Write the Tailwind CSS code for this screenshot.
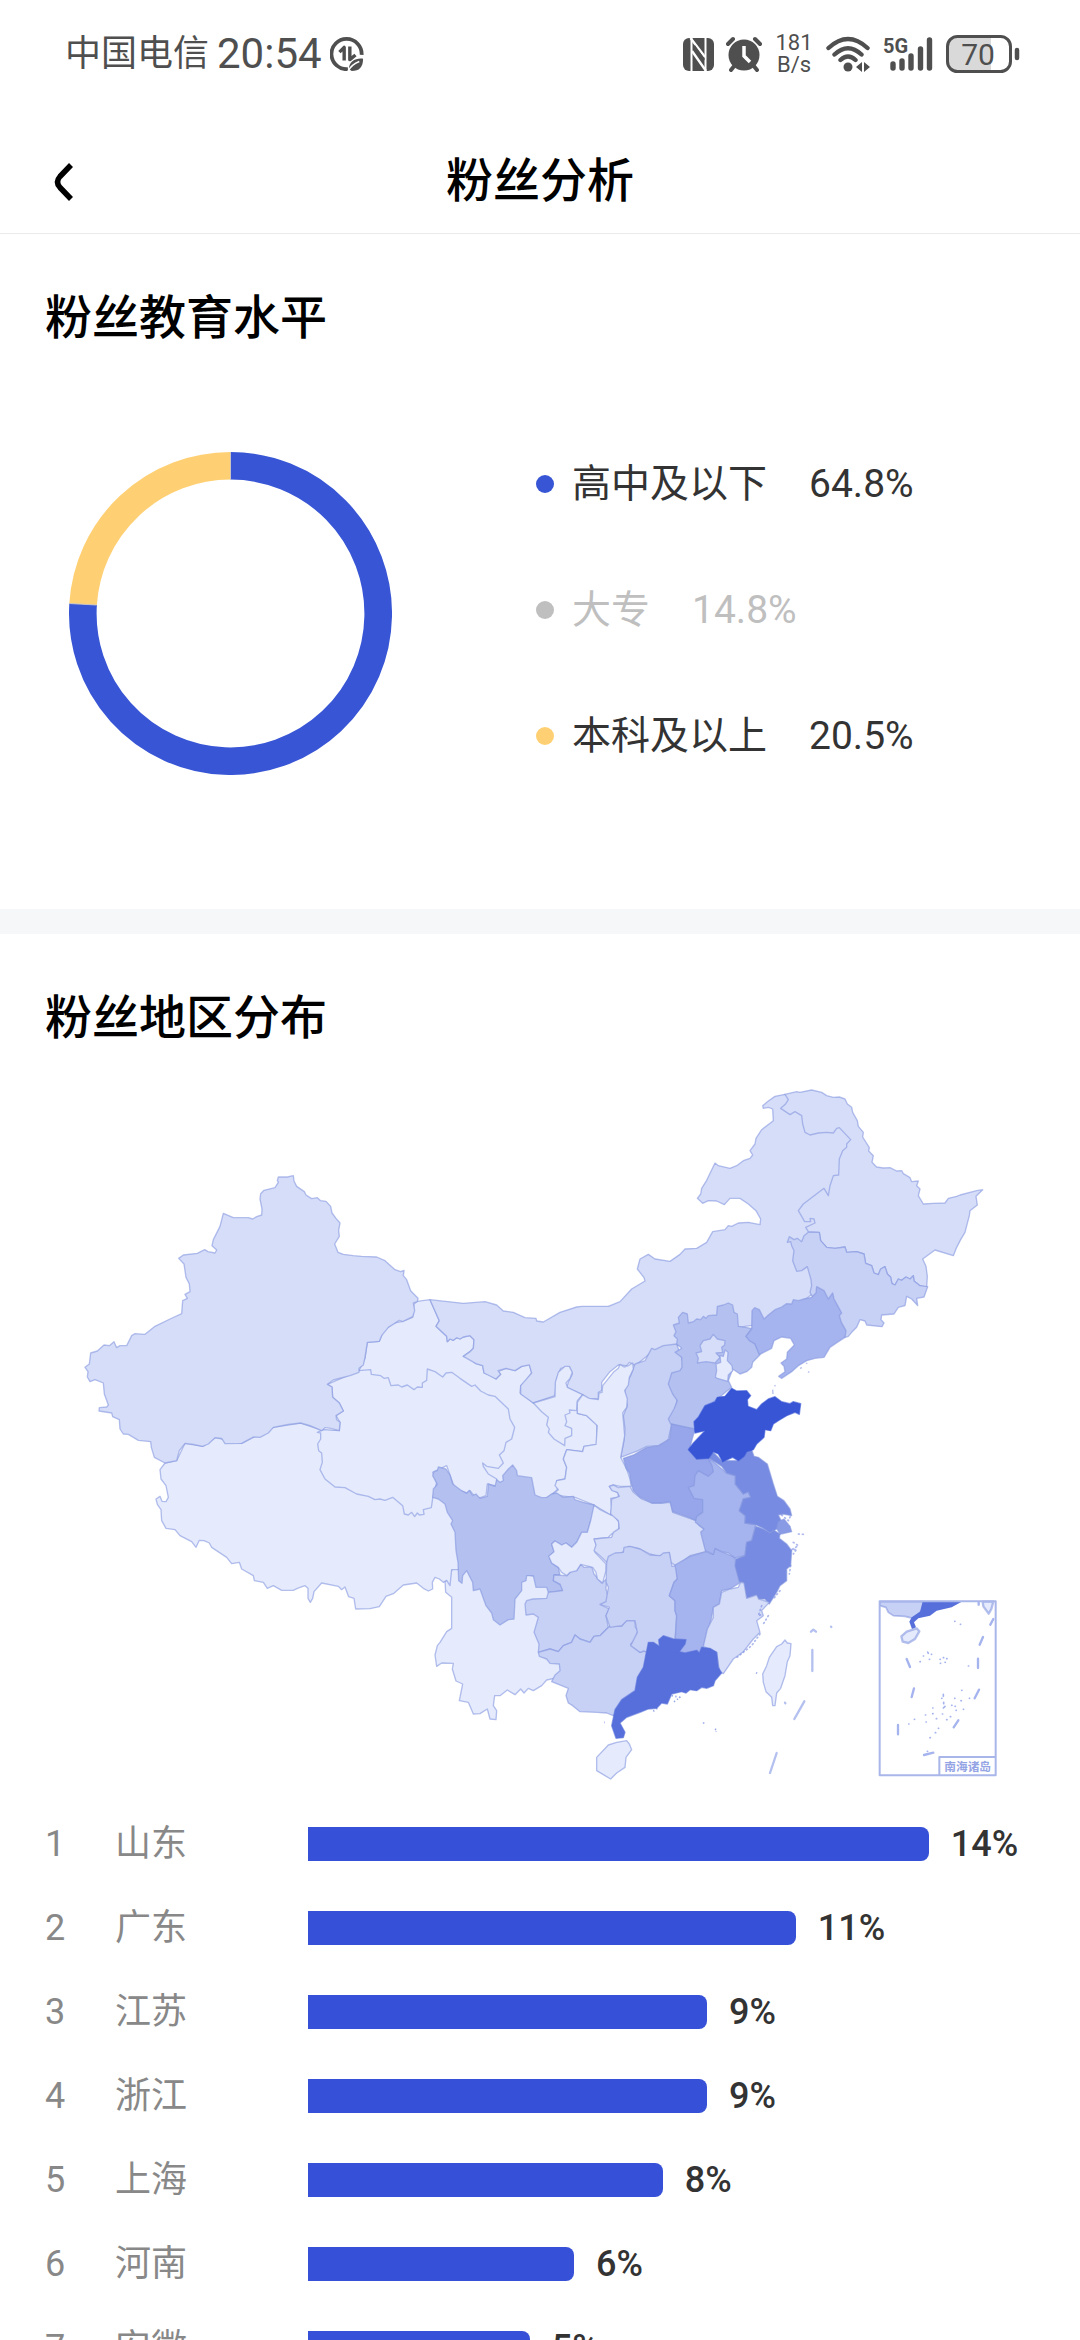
<!DOCTYPE html>
<html lang="zh-CN">
<head>
  <meta charset="UTF-8" />
  <meta name="viewport" content="width=device-width, initial-scale=1" />
  <title>粉丝分析</title>
  <script src="https://cdn.jsdelivr.net/npm/@tailwindcss/browser@4"></script>
  <style>
    body {
      font-family: Roboto, 'Noto Sans CJK SC', sans-serif;
    }
  </style>
</head>
<body class="bg-white h-screen flex flex-col overflow-hidden text-[#333333]">

  <!-- Status bar -->
  <div class="h-[108px] shrink-0 flex items-center justify-between pl-[65px] pr-[60px] text-[#4f4f4f]">
    <div class="flex items-center gap-2">
      <span class="text-[36px] leading-[44px]">中国电信</span>
      <span class="text-[42px] leading-[44px]">20:54</span>
      <svg class="size-[34px]" viewBox="0 0 36 36" fill="none" stroke="currentColor">
        <path d="M33.5 19A16 16 0 1 0 19 34" stroke-width="4" />
        <path d="M10 16L15 11V25M21 10V24L27 19" stroke-width="3.6" stroke-linejoin="round" />
        <path d="M35 23C27 22 20 26 20 34L23 36C31 36 35 32 35 23Z" fill="currentColor" stroke="none" />
        <path d="M19 36C22 31 26 28 31 26" stroke="#fff" stroke-width="1.6" />
      </svg>
    </div>
    <div class="flex items-center gap-3">
      <svg class="w-[31px] h-[33px]" viewBox="0 0 31 33">
        <rect x="0" y="0" width="31" height="33" rx="6" fill="currentColor" />
        <path d="M8.500 0V33M22.500 33V0" stroke="#fff" stroke-width="2" fill="none" />
        <path d="M7.500 0L22 19M9 13L23 33" stroke="#fff" stroke-width="2.400" fill="none" />
        <path d="M11 8L21 22" stroke="currentColor" stroke-width="2.500" />
      </svg>
      <svg class="size-9" viewBox="0 0 36 36">
        <path d="M9 29L5 34M27 29L31 34M2 8L7 3M34 8L29 3" stroke="currentColor" stroke-width="4" stroke-linecap="round" />
        <circle cx="18" cy="19" r="15.500" fill="currentColor" />
        <path d="M18 10V20L24 26" stroke="#fff" stroke-width="3.500" fill="none" />
      </svg>
      <div class="w-10 text-center text-[22px] leading-[22px]">
        <div>181</div>
        <div>B/s</div>
      </div>
      <svg class="w-11 h-9" viewBox="0 0 44 36" fill="none" stroke="currentColor" stroke-width="4.400" stroke-linecap="round">
        <path d="M2.500 12Q22 -6 41.500 12M8.500 18.500Q22 6 35.500 18.500M14.500 24Q22 17 29.500 24" />
        <circle cx="22" cy="31" r="4.500" fill="currentColor" stroke="none" />
        <path d="M36 26V36L30 31ZM38 26V36L44 31Z" fill="currentColor" stroke="none" />
      </svg>
      <svg class="w-13 h-9 overflow-visible" viewBox="0 0 52 36">
        <text x="1" y="17" font-size="20" font-weight="700" fill="currentColor" font-family="Roboto, sans-serif">5G</text>
        <path d="M11 28V32M20 25V32M29 20V32M38.500 13V32M47.500 4V32" stroke="currentColor" stroke-width="5.400" stroke-linecap="round" />
      </svg>
      <svg class="w-[74px] h-[38px]" viewBox="0 0 74 38">
        <path d="M11 2H45V36H11Q2 36 2 27V11Q2 2 11 2Z" fill="#d9d9d9" />
        <rect x="1.500" y="1.500" width="63" height="35" rx="10" fill="none" stroke="currentColor" stroke-width="3" />
        <path d="M71 15V23" stroke="currentColor" stroke-width="4.500" stroke-linecap="round" />
        <text x="32" y="30" text-anchor="middle" font-size="30" fill="currentColor" font-family="Roboto, sans-serif">70</text>
      </svg>
    </div>
  </div>

  <!-- Title bar -->
  <header class="h-[126px] shrink-0 grid grid-cols-[1fr_auto_1fr] items-center pt-5 px-[45px] border-b border-[#ebebeb] text-black">
    <button type="button" aria-label="返回" class="w-12 h-12 flex items-center">
      <svg class="w-9 h-10" viewBox="0 0 36 40" fill="none" stroke="currentColor" stroke-width="5.500">
        <path d="M26 4L15 15.500Q10 21 15 26.500L26 38" />
      </svg>
    </button>
    <h1 class="text-[47px] leading-[60px] font-medium">粉丝分析</h1>
  </header>

  <main class="flex-1 min-h-0 overflow-hidden">
    <section class="pt-[54px] pb-[134px]">
      <h2 class="px-[45px] text-[47px] leading-[60px] font-medium text-black">粉丝教育水平</h2>
      <div class="mt-[104px] pl-[69px] flex items-center">
        <svg class="size-[323px] shrink-0" viewBox="0 0 323 323" fill="none" stroke-width="27.600">
          <path d="M161.500 13.800A147.700 147.700 0 1 1 14.100 152.200" stroke="#3755d5" />
          <path d="M14.100 152.200A147.700 147.700 0 0 1 161.500 13.800" stroke="#ffd073" />
          <path d="M161.500 0V27.600M0 151.500L27.500 153" stroke="#c9c4c0" stroke-width="1" />
        </svg>
        <ul class="ml-36 mb-2 text-[39px] leading-[54px] flex flex-col gap-[72px]">
          <li class="flex items-center gap-[18px]">
            <span class="size-[18px] rounded-full bg-[#3755d5]"></span>
            <span>高中及以下</span>
            <span class="ml-6">64.8%</span>
          </li>
          <li class="flex items-center gap-[18px] text-[#bfbfbf]">
            <span class="size-[18px] rounded-full bg-[#bfbfbf]"></span>
            <span>大专</span>
            <span class="ml-6">14.8%</span>
          </li>
          <li class="flex items-center gap-[18px]">
            <span class="size-[18px] rounded-full bg-[#ffd073]"></span>
            <span>本科及以上</span>
            <span class="ml-6">20.5%</span>
          </li>
        </ul>
      </div>
    </section>

    <div class="h-[25px] bg-[#f6f7f9]"></div>

    <section class="pt-[54px]">
      <h2 class="px-[45px] text-[47px] leading-[60px] font-medium text-black">粉丝地区分布</h2>

      <svg class="mt-[21px] w-full" viewBox="0 0 3240 2190" stroke="#8496e0" stroke-opacity="0.6" stroke-width="4" stroke-linejoin="round">
        <!-- Gansu, Yunnan -->
        <g transform="translate(1200 540)" fill="#e5ebfc">
          <path d="M52 157L90 152L118 215L108 232L125 248L140 262L142 278L150 270L160 274L170 266L180 270L190 264L210 260L222 272L220 298L210 308L190 322L208 326L228 344L248 350L252 372L268 378L288 390L302 376L294 368L318 358L345 365L365 352L388 345L395 372L375 400L362 410L360 432L380 446L400 462L415 465L460 460L540 470L532 493L560 500L590 525L592 586L552 592L548 608L500 602L490 630L500 655L495 690L470 695L472 722L450 740L430 760L300 740L240 640L200 600L-60 500L-123 365L-105 328L-98 280L-62 277L-50 245L-20 222L5 218L38 205L42 165Z" />
          <path d="M150 968L148 988L135 995L137 1030L155 1045L155 1138L140 1148L120 1180L112 1190L105 1218L110 1252L125 1242L160 1243L157 1260L168 1296L188 1305L178 1355L205 1360L220 1395L240 1394L262 1380L270 1410L288 1412L290 1385L280 1370L284 1340L300 1340L322 1323L345 1337L362 1320L372 1332L385 1318L400 1325L425 1310L440 1293L500 1280L500 1000L180 940L165 955Z" />
        </g>
        <!-- Tibet, Qinghai, Xinjiang -->
        <g transform="translate(180 240)">
          <path fill="#e5ebfc" d="M315 942L300 962L303 990L318 1010L325 1045L318 1058L306 1057L300 1042L288 1050L292 1066L303 1082L305 1115L318 1138L345 1142L360 1160L395 1178L408 1195L418 1174L432 1175L448 1182L455 1195L500 1225L515 1244L538 1240L545 1260L580 1280L583 1295L610 1300L622 1318L640 1310L665 1324L700 1324L712 1318L735 1310L744 1318L744 1348L751 1360L758 1348L762 1328L785 1302L835 1312L845 1322L855 1314L866 1343L882 1348L887 1380L930 1379L958 1373L978 1342L1000 1334L1030 1308L1070 1302L1090 1318L1105 1326L1118 1320L1117 1300L1125 1285L1138 1290L1150 1300L1160 1294L1170 1310L1175 1262L1195 1262L1250 1100L1118 1000L900 850L785 843L722 822L640 835L545 883L465 866L428 892L375 883L350 935Z" />
          <path fill="#e5ebfc" d="M897 665L932 662L934 676L962 680L972 688L985 686L993 710L1015 708L1025 714L1042 708L1062 722L1072 714L1087 715L1087 702L1100 694L1102 660L1125 668L1148 684L1158 672L1175 670L1200 688L1235 712L1245 708L1262 726L1285 738L1305 742L1330 766L1345 780L1350 810L1364 835L1355 870L1338 880L1332 905L1318 918L1330 942L1315 958L1280 952L1268 942L1270 952L1285 975L1310 990L1312 1012L1282 1005L1278 1040L1255 1048L1238 1035L1230 1025L1220 1032L1185 1020L1160 950L1118 970L1130 1000L1118 1048L1114 1076L1090 1082L1092 1096L1078 1098L1072 1092L1064 1103L1055 1090L1045 1098L1033 1095L1028 1070L998 1045L975 1054L960 1050L945 1052L925 1042L890 1035L855 1016L825 1014L795 990L780 962L787 940L785 912L776 905L773 885L782 870L782 852L772 850L790 842L838 845L840 820L828 800L850 786L838 762L818 745L816 714L802 706Z" />
          <path fill="#d6ddf8" d="M655 84L682 84L700 80L702 96L710 112L733 128L738 138L755 149L772 146L782 155L798 157L812 172L816 192L828 208L840 222L836 244L838 262L824 285L834 310L850 316L880 320L905 322L950 324L975 335L1005 362L1022 368L1032 364L1030 380L1040 392L1052 425L1074 448L1072 458L1060 462L1064 485L1058 503L1028 518L1018 514L985 535L965 560L958 577L922 580L915 625L910 648L897 658L897 670L870 680L820 693L802 706L816 714L818 745L838 762L850 786L828 800L830 812L840 820L838 845L812 838L795 836L785 845L750 830L722 822L685 826L640 835L625 852L600 865L580 864L545 883L495 884L485 868L465 866L445 885L428 892L400 886L375 883L358 905L350 935L315 942L283 925L274 895L272 878L235 874L205 856L190 855L180 840L178 812L158 803L155 792L117 786L118 776L140 774L145 768L133 735L130 702L105 692L90 698L82 684L84 668L75 655L88 645L92 612L112 606L132 588L148 590L162 578L170 596L180 590L200 590L215 560L225 554L255 556L285 532L330 510L365 494L368 455L382 448L375 436L390 428L388 405L378 385L372 345L356 328L370 318L412 313L434 302L444 308L465 312L470 303L456 290L460 272L480 232L490 193L520 206L565 206L578 210L590 203L605 198L606 180L600 150L602 134L612 124L645 116L655 100L652 94Z" />
        </g>
        <!-- North and north-east -->
        <g transform="translate(1800 0)">
          <path fill="#d6ddf8" d="M-510 692L-410 703L-345 698L-310 708L-290 726L-260 730L-225 746L-192 748L-190 756L-170 759L-120 730L-70 714L-55 712L25 712L60 698L95 660L135 636L132 626L112 600L120 570L145 556L165 570L210 577L240 556L255 540L290 538L320 520L338 488L375 482L385 470L395 472L415 462L445 460L480 467L482 450L468 425L445 405L420 388L390 388L373 407L350 396L325 395L308 403L292 388L302 375L305 358L320 334L345 282L355 290L390 298L410 290L430 275L450 268L458 258L450 245L465 225L468 208L485 182L520 155L518 120L505 115L490 118L488 110L505 96L525 82L555 76L760 150L760 212L700 600L645 670L520 760L415 775L230 830L155 850L105 890L88 880L80 890L55 888L30 908L5 940L5 965L-5 970L-5 990L-35 990L-55 977L-100 955L-95 940L-83 915L-92 893L-118 898L-130 930L-135 980L-200 1002L-238 975L-238 950L-205 912L-212 888L-235 892L-255 905L-282 898L-306 905L-298 916L-312 930L-348 912L-352 890L-372 884L-410 862L-390 848L-380 838L-378 812L-390 800L-410 804L-420 810L-430 806L-440 814L-450 810L-458 818L-460 802L-492 772L-482 755Z" />
          <path fill="#d6ddf8" d="M555 76L590 68L600 70L635 63L665 70L680 80L700 85L718 84L735 90L742 105L755 115L758 130L772 155L775 172L790 190L788 204L808 236L806 246L820 260L816 280L830 294L850 297L870 296L890 306L905 305L910 314L930 326L935 338L955 336L950 350L960 360L955 380L970 405L1000 403L1035 402L1045 388L1070 382L1080 378L1130 365L1148 362L1128 382L1132 408L1110 425L1108 440L1095 490L1082 512L1070 535L1060 560L1005 543L968 570L978 592L982 622L980 655L960 650L942 636L940 620L930 630L918 624L905 634L895 630L885 648L876 644L872 625L862 615L855 593L842 600L835 617L822 612L815 590L797 583L792 555L770 548L740 550L735 534L705 538L680 535L662 515L658 490L625 488L617 475L645 462L642 450L630 448L632 458L614 458L595 425L610 405L672 358L685 380L690 350L700 320L716 318L718 270L728 245L740 235L740 225L752 212L718 176L710 178L700 192L680 190L655 192L630 198L615 190L608 165L605 140L585 128L570 137L542 118L556 106L565 92Z" />
          <path fill="#c7d0f5" d="M562 520L568 503L582 512L592 508L605 518L612 500L625 490L658 490L662 515L680 535L705 538L735 534L740 550L770 548L792 555L797 583L815 590L822 612L835 617L842 600L855 593L862 615L872 625L876 644L885 648L895 630L905 634L918 624L930 630L940 620L942 636L960 650L983 653L972 684L950 688L953 710L935 690L920 682L915 710L895 715L882 735L845 738L843 752L852 762L846 773L800 768L795 756L780 752L770 775L755 790L745 802L735 805L690 780L630 670L635 650L633 632L622 593L605 605L590 607L578 575L582 545L575 530L572 518Z" />
          <path fill="#c7d0f5" d="M105 885L135 875L155 838L165 842L190 830L230 825L250 880L230 1000L212 1080L205 1110L200 1118L180 1130L140 1132L115 1145L62 1165L72 1115L75 1080L70 1040L82 1010L74 980L75 950L92 920Z" />
          <path fill="#b4c1f0" d="M235 745L248 730L262 735L265 762L280 758L290 750L302 752L310 742L318 748L325 740L350 738L352 712L370 708L385 702L398 708L402 730L412 735L415 772L455 778L438 802L465 825L480 857L458 880L455 895L440 908L420 915L398 900L385 935L395 955L340 1000L290 1085L250 1078L212 1065L205 1050L222 1020L232 995L218 975L205 945L215 912L240 905L246 895L245 865L225 850L245 838L230 825L232 810L222 800L228 788L220 768L238 762Z" />
          <path fill="#d6ddf8" d="M340 796L352 810L375 815L374 828L365 835L368 850L348 852L360 865L345 882L318 878L292 882L295 868L288 852L305 848L300 830L310 815L330 810Z" />
          <path fill="#e5ebfc" d="M375 843L384 850L382 875L396 890L398 905L385 918L383 937L352 928L346 925L350 905L348 885L362 880L360 860L370 862Z" />
          <path fill="#a5b3ee" d="M650 653L672 665L685 690L698 672L702 690L714 712L725 732L718 740L724 760L738 785L735 805L712 820L690 835L672 865L645 868L620 875L595 890L575 908L545 928L536 922L555 908L552 892L543 882L560 870L562 850L583 828L572 808L545 804L522 815L515 838L478 857L465 825L448 815L438 802L455 780L456 725L464 716L478 722L492 750L505 738L525 722L545 714L560 704L575 705L580 692L595 695L612 690L635 685L648 672Z" />
          <path fill="#a5b3ee" d="M600 898L606 896M624 908L628 910M618 882L622 884M524 948L526 952M518 962L519 975" />
        </g>
        <!-- West and south-west -->
        <g transform="translate(1200 540)">
          <path fill="#e5ebfc" d="M400 462L465 443L466 400L475 370L495 352L508 352L517 370L510 388L498 402L502 415L548 437L532 455L530 485L508 483L510 492L495 498L500 518L495 530L515 538L515 560L495 568L494 590L462 570L445 550L448 540L440 528L445 505L425 488Z" />
          <path fill="#e5ebfc" d="M548 437L568 448L595 452L597 432L606 430L608 410L640 370L655 358L660 346L672 354L685 350L698 342L700 360L688 385L685 408L674 425L682 450L680 475L668 492L674 560L662 625L680 660L690 690L694 712L660 712L640 708L628 712L636 722L655 732L655 745L632 748L635 775L632 798L582 768L525 745L455 738L475 722L465 710L470 695L495 690L500 655L490 630L500 602L548 608L552 592L588 586L592 530L560 500L532 493L532 460Z" />
          <path fill="#b4c1f0" d="M98 680L102 668L112 665L115 654L138 660L150 678L158 705L185 725L200 733L208 724L218 740L228 735L240 748L262 742L265 705L285 712L290 692L300 700L310 695L308 680L325 660L338 648L350 665L352 680L395 686L405 738L425 746L440 745L455 735L470 732L490 745L520 742L525 752L550 760L582 768L585 800L572 815L562 850L545 850L530 880L515 895L498 882L485 888L465 876L455 885L462 908L448 922L455 942L475 955L480 978L462 978L460 995L485 1010L488 1025L445 1030L440 1015L408 1015L400 980L380 980L378 995L365 1000L365 1025L345 1050L342 1110L325 1112L300 1128L280 1112L275 1092L258 1070L240 1020L220 1025L218 1000L200 965L188 980L186 1003L176 995L174 940L168 905L165 850L153 825L158 815L142 790L135 765L115 750L98 745L100 720L112 706Z" />
          <path fill="#c7d0f5" d="M375 1065L380 1055L398 1050L440 1048L445 1030L488 1025L480 1005L460 995L462 978L500 980L515 965L530 965L542 946L552 955L575 953L582 975L605 1002L620 990L618 1020L628 1055L603 1068L628 1080L618 1100L625 1135L600 1160L582 1162L570 1180L540 1170L525 1158L515 1180L490 1190L475 1208L450 1200L415 1210L417 1185L402 1150L415 1105L400 1095L378 1098Z" />
          <path fill="#c7d0f5" d="M415 1210L450 1200L475 1208L490 1190L515 1180L525 1158L540 1170L570 1180L582 1162L600 1160L630 1130L665 1132L678 1115L705 1115L706 1135L714 1145L705 1175L692 1185L720 1210L740 1205L735 1260L720 1330L640 1400L620 1392L590 1390L540 1388L518 1370L505 1362L498 1340L505 1318L455 1298L465 1278L480 1265L478 1245L450 1243L440 1230L418 1222Z" />
          <path fill="#e5ebfc" d="M582 768L600 782L632 798L642 798L657 820L655 850L635 855L625 865L583 870L590 890L585 910L618 945L618 965L608 1002L592 990L588 970L578 955L542 946L530 965L510 970L500 980L485 970L475 955L455 942L446 922L462 908L455 885L465 876L485 888L498 882L515 895L530 880L545 850L562 850L572 815Z" />
        </g>
        <!-- East and south -->
        <g transform="translate(1740 900)">
          <path fill="#d6ddf8" d="M88 352L100 348L115 356L150 352L160 370L185 390L215 402L245 402L272 400L278 430L348 455L358 470L372 480L378 548L330 560L290 592L272 580L268 552L235 562L210 555L180 540L145 532L130 548L80 580L60 560L42 545L48 528L42 510L95 505L100 490L118 478L115 455L92 435L95 390L118 382L112 370L96 365Z" />
          <path fill="#97a6ea" d="M130 268L160 258L200 235L235 230L268 210L275 165L345 180L330 235L385 268L402 300L380 392L368 430L348 455L328 446L300 436L278 428L270 398L245 402L215 402L180 385L160 365L154 345L148 312L138 298Z" />
          <path fill="#c7d0f5" d="M80 580L85 562L105 552L130 550L132 535L150 532L180 540L210 558L240 560L250 552L268 550L276 592L290 590L292 630L282 640L268 680L285 695L285 725L290 740L285 815L205 850L190 846L180 850L152 830L172 790L165 755L140 755L125 770L90 775L78 740L88 715L60 706L78 698L85 655L78 640Z" />
          <path fill="#a5b3ee" d="M285 588L330 562L378 548L400 556L405 538L425 548L465 565L470 600L482 640L450 660L425 665L418 705L400 715L395 745L370 835L358 855L300 855L286 808L290 740L285 725L285 695L268 680L282 640L292 630Z" />
          <path fill="#a5b3ee" d="M385 268L400 278L440 312L466 320L466 345L490 375L505 368L512 385L490 390L478 425L496 440L495 462L527 467L515 515L500 520L495 560L465 567L445 552L425 548L405 538L400 556L376 545L362 490L372 480L346 460L350 442L368 430L368 392L342 388L325 355L342 350L345 320L355 305L385 322L400 308L396 290Z" />
          <path fill="#768be1" d="M385 266L400 250L425 275L475 275L500 248L515 242L522 262L535 265L562 285L580 345L592 382L612 395L630 420L635 440L610 435L595 438L610 468L570 492L550 478L527 467L495 462L496 440L478 425L490 390L512 385L505 368L490 375L466 345L466 320L440 312L425 292Z" />
          <path fill="#8a9be6" d="M595 458L612 450L630 472L635 488L600 496L590 478Z" />
          <path fill="#768be1" d="M527 472L550 480L570 492L582 484L600 495L598 508L620 525L635 545L632 590L620 600L620 635L600 650L590 670L568 705L555 690L535 690L528 678L500 688L490 640L478 638L465 590L468 570L495 560L500 520L515 515Z" />
          <path fill="#d6ddf8" d="M492 642L500 688L530 678L536 690L568 700L545 725L550 740L530 755L540 790L520 810L490 848L460 870L430 914L418 905L410 850L370 832L382 780L400 745L400 715L418 705L425 670L450 660L475 655L482 640Z" />
          <path fill="#566fdb" stroke="#566fdb" d="M205 820L220 820L238 832L236 812L250 800L280 810L318 812L315 825L298 848L315 852L350 844L358 852L365 835L390 838L410 850L415 895L425 912L405 935L400 950L380 958L365 955L350 965L330 962L318 972L305 968L275 975L262 1005L245 1002L230 1018L205 1020L180 1030L140 1045L120 1062L135 1090L130 1106L108 1108L95 1070L105 1022L125 992L165 965L172 925L190 895Z" />
          <path fill="#3755d5" stroke="#3755d5" d="M455 58L470 66L500 65L512 80L502 92L504 112L530 122L545 105L565 90L585 83L605 98L630 104L640 98L662 104L658 136L645 130L620 140L595 155L580 165L572 185L555 182L552 205L530 225L520 242L500 248L492 262L475 275L458 265L428 278L415 255L400 248L386 268L350 270L325 242L340 222L375 185L345 192L342 158L355 145L375 110L405 98L412 85L435 82Z" />
          <path fill="#e5ebfc" d="M85 1128L110 1120L140 1115L148 1125L155 1142L138 1165L135 1195L110 1212L92 1230L75 1220L50 1205L50 1165Z" />
          <path fill="none" stroke="#768be1" stroke-width="5" stroke-linecap="round" stroke-dasharray="3 9" d="M605 438L625 455L632 440M655 495L672 496M640 520L655 530L630 545L650 540L640 555M632 590L628 615M600 665L580 690M545 710L535 740L550 735M565 740L550 765M540 795L515 830L490 850L465 870" />
          <path fill="none" stroke="#566fdb" stroke-width="5" stroke-dasharray="4 7" d="M275 980L300 985L280 1000M232 1018L215 1030M72 1060L74 1060M370 1060L372 1064M405 1080L411 1084L408 1088M528 911L534 914" />
        </g>
        <!-- Taiwan, dashes and the South China Sea inset -->
        <g transform="translate(2280 1530)">
          <path fill="#e5ebfc" d="M75 183L82 192L93 194L90 230L82 248L75 290L62 328L50 342L45 380L38 380L35 355L18 338L10 310L8 285L20 260L28 235L50 203L65 195Z" />
          <g fill="none" stroke="#b4c1f0" stroke-opacity="1" stroke-width="7" stroke-linecap="round">
            <path d="M157 213V276M133 367L103 420M50 522L30 582M153 158L160 152L168 158M213 143L214 144M75 371L76 373" />
          </g>
          <path fill="#c7d0f5" stroke-width="5" d="M360 68H490L485 95L460 118L435 112L400 110L385 100L378 85L360 80Z" />
          <path fill="#566fdb" stroke="none" d="M488 68H605L575 85L530 95L510 110L475 118L462 130L468 145L456 150L448 128L455 115L480 98Z" />
          <path fill="#e5ebfc" stroke-width="7" d="M470 148L478 157L465 180L445 192L428 188L424 172L440 158ZM668 68L670 82L686 104L694 90L700 68Z" />
          <g fill="none" stroke="#a5b3ee" stroke-opacity="1" stroke-width="7" stroke-linecap="round">
            <path d="M669 174L659 197M654 239V267M657 332L644 358M595 424L581 445M440 240L450 264M462 328L455 354M414 438V466M492 528L520 521M700 120L691 137M656 70V77" />
          </g>
          <path fill="none" stroke="#a5b3ee" stroke-opacity="1" stroke-width="5" stroke-linecap="round" d="M480 248H481M490 231H491M503 219L505 223M514 226H515M508 241H509M540 241H541M550 236H551M560 239H561M541 253H542M555 250H556M584 127H585M601 136H602M625 261H626M605 334H606M550 346V352M545 358H546M584 358H585M628 358H629M551 370V374M575 379H576M585 382H586M603 365H604M610 391H611M588 394H589M555 382L550 387M518 387H519M496 408H497M518 404H519M547 405H548M529 419H530M560 422H561M571 413H572M463 421H464M446 435H447M498 429H499M535 448H536M526 461H527M510 476H511M502 517H503" />
          <path fill="none" stroke="#a9b6ea" stroke-opacity="1" stroke-width="6" d="M359 67H707V589H359ZM538 589V534H707" />
          <text x="623" y="576" text-anchor="middle" font-size="35" font-weight="700" fill="#94a4e5" stroke="none" font-family="Noto Sans CJK SC, sans-serif">南海诸岛</text>
        </g>
      </svg>

      <ol id="regionList" class="mt-[3px] px-[45px] text-[36px] leading-[48px]"></ol>
    </section>
  </main>

  <script>
    const regions = [
      ['山东', 14],
      ['广东', 11],
      ['江苏', 9],
      ['浙江', 9],
      ['上海', 8],
      ['河南', 6],
      ['安徽', 5],
    ];
    // track width taken by one percent of fans
    const step = 6.1;

    document.getElementById('regionList').innerHTML = regions.map(([name, value], i) => `
      <li class="h-[84px] flex items-center">
        <span class="w-[70px] shrink-0 text-[#888888]">${i + 1}</span>
        <span class="w-[193px] shrink-0 text-[#888888]">${name}</span>
        <div class="flex-1 flex items-center gap-[22px]">
          <div class="h-[34px] shrink-0 rounded-r-lg bg-[#3650d8]" style="width: ${(value * step).toFixed(1)}%"></div>
          <span class="font-medium">${value}%</span>
        </div>
      </li>`).join('');
  </script>
</body>
</html>
